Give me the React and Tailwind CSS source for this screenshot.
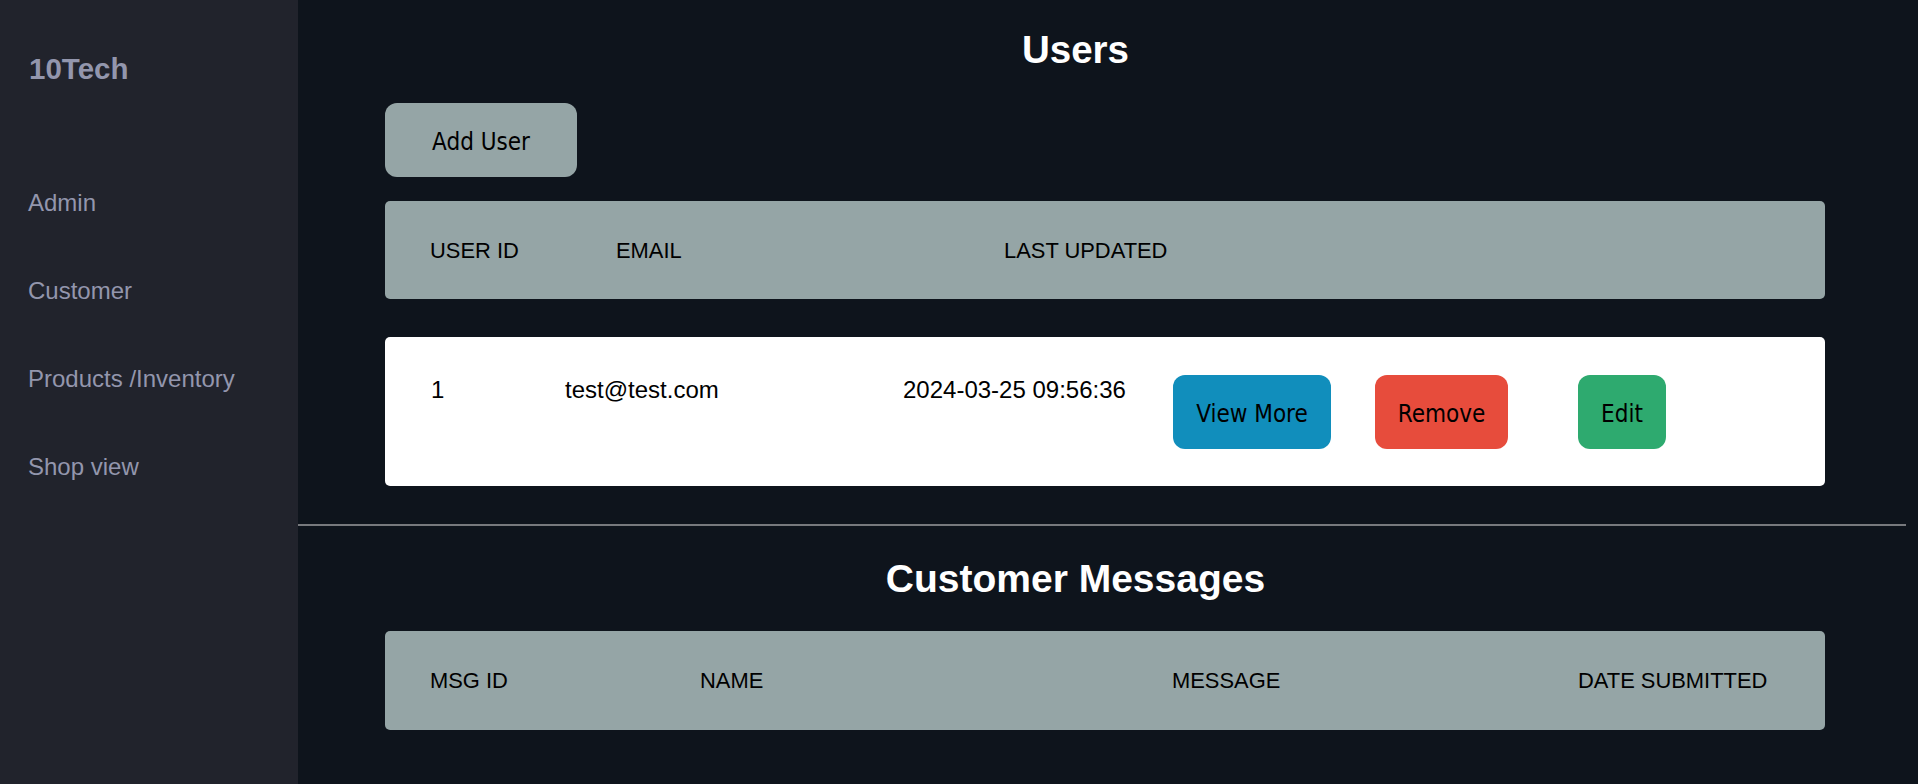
const navItems = ["Admin", "Customer", "Products /Inventory", "Shop view"];

function Sidebar() {
  return (
    <aside className="w-[298px] shrink-0 bg-[#21232c] min-h-screen">
      <div className="pl-[29px] pt-[52px] text-[29.5px] leading-[33px] font-bold text-[#9396ad]">10Tech</div>
      <nav className="mt-[104px] pl-[28px] flex flex-col gap-[60.4px]">
        {navItems.map((item) => (
          <a key={item} className="text-[24px] leading-[27.6px] text-[#9396ad]">
            {item}
          </a>
        ))}
      </nav>
    </aside>
  );
}

function Btn({ className, children }) {
  return (
    <button
      className={
        "h-[74px] pt-[3px] rounded-[12px] text-black text-[24px] flex items-center justify-center " +
        className
      }
      style={{ fontFamily: '"DejaVu Sans Condensed", "DejaVu Sans", sans-serif', fontStretch: "condensed" }}
    >
      {children}
    </button>
  );
}

function UsersSection() {
  return (
    <section>
      <h1 className="mt-[28px] w-[1555px] text-center text-[38.5px] leading-[44px] font-bold text-white">Users</h1>

      <div className="pl-[87px] mt-[31px]">
        <Btn className="w-[192px] bg-[#95a5a6]">Add User</Btn>
      </div>

      <div className="ml-[87px] w-[1440px] mt-[24px] h-[98px] rounded-[5px] bg-[#95a5a6] flex items-center pl-[45px] pt-[2px] text-[21.9px] text-black">
        <div className="w-[186px]">USER ID</div>
        <div className="w-[388px]">EMAIL</div>
        <div>LAST UPDATED</div>
      </div>

      <div className="ml-[87px] w-[1440px] mt-[38px] h-[149px] rounded-[5px] bg-white flex items-start pt-[38px] pl-[46px] text-[24px] text-black">
        <div className="w-[134px] leading-[27.6px] pt-[1px]">1</div>
        <div className="w-[338px] leading-[27.6px] pt-[1px]">test@test.com</div>
        <div className="w-[270px] leading-[27.6px] pt-[1px]">2024-03-25 09:56:36</div>
        <div className="w-[202px]">
          <Btn className="w-[158px] bg-[#118ebc]">View More</Btn>
        </div>
        <div className="w-[203px]">
          <Btn className="w-[133px] bg-[#e74c3c]">Remove</Btn>
        </div>
        <div>
          <Btn className="w-[88px] bg-[#2eaa6f]">Edit</Btn>
        </div>
      </div>
    </section>
  );
}

function MessagesSection() {
  return (
    <section>
      <h1 className="mt-[31px] w-[1555px] text-center text-[39px] leading-[44px] font-bold text-white">Customer Messages</h1>
      <div className="ml-[87px] w-[1440px] mt-[30px] h-[99px] rounded-[5px] bg-[#95a5a6] flex items-center pl-[45px] pt-[2px] text-[21.9px] text-black">
        <div className="w-[270px]">MSG ID</div>
        <div className="w-[472px]">NAME</div>
        <div className="w-[406px]">MESSAGE</div>
        <div>DATE SUBMITTED</div>
      </div>
    </section>
  );
}

export default function App() {
  return (
    <div
      className="flex min-h-screen bg-[#0e141c] overflow-hidden"
      style={{ fontFamily: '"Liberation Sans", Arial, sans-serif' }}
    >
      <Sidebar />
      <main className="w-[1608px] shrink-0">
        <UsersSection />
        <hr className="mt-[38px] h-0 border-0 border-t-2 border-[#77797d]" />
        <MessagesSection />
      </main>
    </div>
  );
}
